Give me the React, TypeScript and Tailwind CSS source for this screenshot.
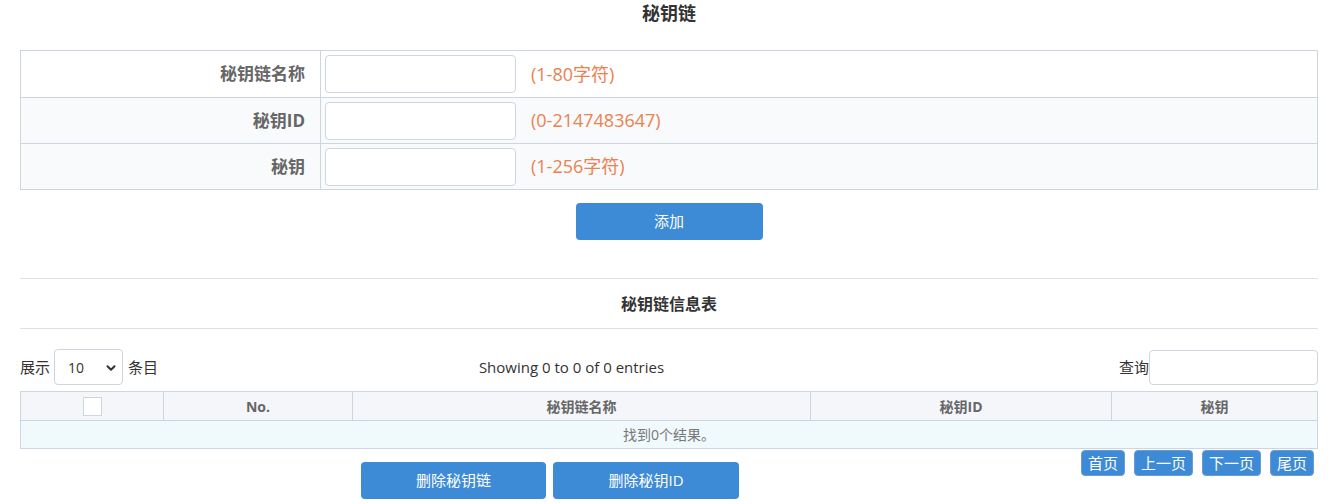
import { ChevronDown } from "lucide-react";

const font = { fontFamily: '"Open Sans", "Noto Sans CJK SC", sans-serif' };

const formRows = [
  { label: "秘钥链名称", hint: "(1-80字符)", bg: "bg-white" },
  { label: "秘钥ID", hint: "(0-2147483647)", bg: "bg-[#f9fafb]" },
  { label: "秘钥", hint: "(1-256字符)", bg: "bg-[#f9fafb]" },
];

export default function App() {
  return (
    <div className="w-[1338px] h-[504px] bg-white text-[#333] overflow-hidden" style={font}>
      <div className="px-5">
        {/* Title */}
        <h2 className="h-[30px] pt-[1px] text-center text-[18px] font-bold text-[#333] leading-[24px]">
          秘钥链
        </h2>

        {/* Form */}
        <div className="mt-[20px] border border-[#cdd5e0]">
          {formRows.map((row, i) => (
            <div
              key={row.label}
              className={`flex h-[46px] ${row.bg} ${i > 0 ? "border-t border-[#cdd5e0]" : ""}`}
            >
              <div className="w-[300px] shrink-0 border-r border-[#cdd5e0] flex items-center justify-end pr-[15px] text-[17px] font-bold text-[#666]">
                {row.label}
              </div>
              <div className="flex items-center pl-[4px]">
                <input
                  className="w-[191px] h-[38px] bg-white border border-[#cfd6e0] rounded-[4px] outline-none"
                  type="text"
                />
                <span className="ml-[15px] text-[18px] text-[#ec8150]">{row.hint}</span>
              </div>
            </div>
          ))}
        </div>

        <div className="flex justify-center mt-[13px]">
          <button className="w-[187px] h-[37px] rounded-[4px] bg-[#3d8bd6] text-white text-[15px]">
            添加
          </button>
        </div>

        {/* Info table heading */}
        <div className="mt-[38px] border-t border-[#dde1e6]" />
        <h3 className="h-[49px] flex items-center justify-center text-[16px] font-bold text-[#333]">
          秘钥链信息表
        </h3>
        <div className="border-t border-[#dde1e6]" />

        {/* Controls */}
        <div className="mt-[20px] flex items-center h-[36px] text-[15px] text-[#333]">
          <div className="flex items-center w-[300px]">
            <span>展示</span>
            <div className="relative ml-[4px] w-[69px] h-[36px] border border-[#cfd6e0] rounded-[4px] flex items-center pl-[13px] text-[14px]">
              10
              <ChevronDown className="absolute right-[4px] top-[11px] w-[14px] h-[14px]" strokeWidth={3.5} />
            </div>
            <span className="ml-[5px]">条目</span>
          </div>
          <div className="flex-1 text-center text-[15px] pr-[296px]">Showing 0 to 0 of 0 entries</div>
          <div className="flex items-center">
            <span>查询</span>
            <input className="w-[169px] h-[35px] border border-[#cfd6e0] rounded-[4px] outline-none" type="text" />
          </div>
        </div>

        {/* Data table */}
        <table className="mt-[6px] w-full border-collapse text-[14px]">
          <thead>
            <tr className="h-[29px] bg-[#f5f6fa] text-[#666] font-bold">
              <th className="w-[143px] border border-[#cdd5e0]">
                <div className="mx-auto w-[19px] h-[19px] bg-white border border-[#cdd5e0]" />
              </th>
              <th className="w-[189px] border border-[#cdd5e0]">No.</th>
              <th className="w-[458px] border border-[#cdd5e0]">秘钥链名称</th>
              <th className="w-[301px] border border-[#cdd5e0]">秘钥ID</th>
              <th className="border border-[#cdd5e0]">秘钥</th>
            </tr>
          </thead>
          <tbody>
            <tr className="h-[28px] bg-[#f0fafd]">
              <td colSpan={5} className="border border-[#cdd5e0] text-center text-[#777]">
                找到0个结果。
              </td>
            </tr>
          </tbody>
        </table>

        {/* Bottom actions */}
        <div className="flex">
          <div className="flex-1 flex gap-[7px] pl-[341px] pt-[13px]">
            <button className="w-[185px] h-[37px] rounded-[4px] bg-[#3d8bd6] text-white text-[15px]">
              删除秘钥链
            </button>
            <button className="w-[186px] h-[37px] rounded-[4px] bg-[#3d8bd6] text-white text-[15px]">
              删除秘钥ID
            </button>
          </div>
          <div className="flex gap-[9px] pt-[1px] pr-[4px] h-[27px]">
            {["首页", "上一页", "下一页", "尾页"].map((p) => (
              <button
                key={p}
                className="h-[26px] px-[6px] rounded-[4px] bg-[#3d8bd6] border border-[#6b9bcf] text-white text-[15px]"
              >
                {p}
              </button>
            ))}
          </div>
        </div>
      </div>
    </div>
  );
}
